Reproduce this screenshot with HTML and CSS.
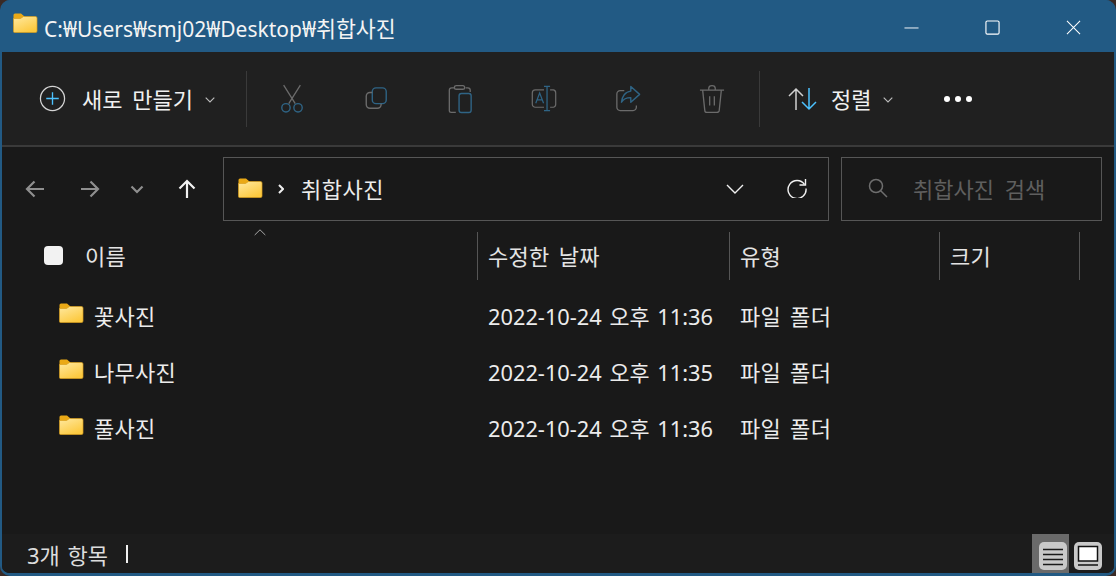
FILE: index.html
```html
<!DOCTYPE html>
<html lang="ko">
<head>
<meta charset="utf-8">
<title>취합사진</title>
<link rel="stylesheet" href="styles.css">
</head>
<body>
<svg class="defs" width="0" height="0" aria-hidden="true">
  <defs>
    <linearGradient id="fg" x1="0" y1="0" x2="0.6" y2="1">
      <stop offset="0" stop-color="#ffe9a0"/>
      <stop offset="1" stop-color="#fcc93f"/>
    </linearGradient>
    <symbol id="folder" viewBox="0 0 25 20">
      <path d="M0.5 2 a1.5 1.5 0 0 1 1.5-1.5 h6 l3.5 3 v3 h-11 z" fill="#eaa916"/>
      <path d="M0.5 5.5 h7 l3-2 h12 a1.5 1.5 0 0 1 1.5 1.5 v13 a1.5 1.5 0 0 1-1.5 1.5 h-21 a1 1 0 0 1-1-1 z" fill="url(#fg)" stroke="#d99f1e" stroke-width="0.7"/>
    </symbol>
  </defs>
</svg>
<div class="window">
  <header class="titlebar">
    <svg class="title-folder"><use href="#folder"/></svg>
    <span class="title-text">C:₩Users₩smj02₩Desktop₩<span class="title-ko">취합사진</span></span>
    <div class="controls">
      <svg class="ctl" viewBox="0 0 16 16"><path d="M0.5 8.5h15" stroke="#fff" fill="none"/></svg>
      <svg class="ctl" viewBox="0 0 16 16"><rect x="1" y="1" width="14" height="14" rx="1.5" stroke="#fff" stroke-width="1.2" fill="none"/></svg>
      <svg class="ctl" viewBox="0 0 16 16"><path d="M1 1l14 14M15 1L1 15" stroke="#fff" stroke-width="1.1" fill="none"/></svg>
    </div>
  </header>

  <section class="toolbar">
    <button class="new-btn">
      <svg class="ic-new" viewBox="0 0 28 28"><circle cx="14" cy="14" r="12.5" fill="none" stroke="#d4d4d4" stroke-width="1.3"/><path d="M14 7.5v13M7.5 14h13" stroke="#4cc2ff" stroke-width="1.4"/></svg>
      <span class="label">새로 만들기</span>
      <svg class="caret" viewBox="0 0 10 6"><path d="M0.7 0.7L5 5l4.3-4.3" fill="none" stroke="#bdbdbd" stroke-width="1.1"/></svg>
    </button>
    <span class="tsep"></span>
    <div class="tools">
      <svg class="tool" viewBox="0 0 28 32"><path d="M5 1l12.5 20M23 1L10.5 21" stroke="#6b6b6b" stroke-width="1.4" fill="none"/><circle cx="7.5" cy="25.5" r="4.5" fill="none" stroke="#2f6485" stroke-width="1.5"/><circle cx="20.5" cy="25.5" r="4.5" fill="none" stroke="#2f6485" stroke-width="1.5"/></svg>
      <svg class="tool" viewBox="0 0 28 32"><rect x="10" y="4" width="15" height="17" rx="4" fill="none" stroke="#2f6485" stroke-width="1.5"/><path d="M10 9h-2.5a4 4 0 0 0-4 4v9a4 4 0 0 0 4 4h8a4 4 0 0 0 4-4v-1" fill="none" stroke="#6b6b6b" stroke-width="1.5"/></svg>
      <svg class="tool" viewBox="0 0 28 32"><path d="M8 4h-3a2.500 2.500 0 0 0-2.500 2.500v22a2 2 0 0 0 2 2h5M20 4h2.500a2.500 2.500 0 0 1 2.500 2.500v2" fill="none" stroke="#6b6b6b" stroke-width="1.4"/><rect x="8" y="1.500" width="11" height="4" rx="2" fill="none" stroke="#6b6b6b" stroke-width="1.4"/><rect x="13" y="10" width="13" height="20.500" rx="2.500" fill="none" stroke="#2f6485" stroke-width="1.5"/></svg>
      <svg class="tool wide" viewBox="0 0 30 32"><path d="M15 5.500h-10a3.500 3.500 0 0 0-3.500 3.500v13a3.500 3.500 0 0 0 3.500 3.500h10M22 5.500h4a3.500 3.500 0 0 1 2.500 3.500v13a3.500 3.500 0 0 1-2.500 3.500h-4" fill="none" stroke="#6b6b6b" stroke-width="1.4"/><path d="M15 1.500h7M15 29.500h7M18.500 1.500v28" stroke="#2f6485" stroke-width="1.500" fill="none"/><path d="M5.500 21l4.500-12 4.500 12M7 17h6" stroke="#2f6485" stroke-width="1.400" fill="none"/></svg>
      <svg class="tool wide" viewBox="0 0 28 32"><path d="M10 7h-4.500a3.500 3.500 0 0 0-3.500 3.500v14.500a3.500 3.500 0 0 0 3.500 3.500h14a3.500 3.500 0 0 0 3.500-3.500v-2" fill="none" stroke="#6b6b6b" stroke-width="1.400"/><path d="M17 2.500l9.500 8.500-9.500 8.500v-5c-5 0-8 1.500-10 5 .5-6 4-11.500 10-12z" fill="none" stroke="#2f6485" stroke-width="1.500" stroke-linejoin="round"/></svg>
      <svg class="tool wide" viewBox="0 0 28 32"><path d="M1 6.500h26M4 7l2.200 21a2.500 2.500 0 0 0 2.500 2.500h10.600a2.500 2.500 0 0 0 2.500-2.500l2.200-21M10.500 6.500v-2a3.500 3 0 0 1 7 0v2M11.500 13v10M16.500 13v10" fill="none" stroke="#6b6b6b" stroke-width="1.400"/></svg>
    </div>
    <span class="tsep"></span>
    <button class="sort-btn">
      <svg class="ic-sort" viewBox="0 0 29 24"><path d="M8 23V2M1 9l7-7 7 7" fill="none" stroke="#d0d0d0" stroke-width="1.500"/><path d="M21 1v21M14 15l7 7 7-7" fill="none" stroke="#4cc2ff" stroke-width="1.500"/></svg>
      <span class="label">정렬</span>
      <svg class="caret" viewBox="0 0 10 6"><path d="M0.7 0.7L5 5l4.3-4.3" fill="none" stroke="#bdbdbd" stroke-width="1.100"/></svg>
    </button>
    <div class="more"><i></i><i></i><i></i></div>
  </section>

  <main class="content">
    <nav class="navbar">
      <div class="navbtns">
        <svg class="nb" viewBox="0 0 20 20"><path d="M19 10H2M9.500 2.500L2 10l7.500 7.500" fill="none" stroke="#8f8f8f" stroke-width="2.200"/></svg>
        <svg class="nb fw" viewBox="0 0 20 20"><path d="M1 10h17M10.500 2.500L18 10l-7.500 7.500" fill="none" stroke="#8f8f8f" stroke-width="2.200"/></svg>
        <svg class="nb dn" viewBox="0 0 14 9"><path d="M1.500 1.500L7 7l5.500-5.500" fill="none" stroke="#8f8f8f" stroke-width="2.200"/></svg>
        <svg class="nb up" viewBox="0 0 20 20"><path d="M10 19V2M2.500 9.500L10 2l7.500 7.500" fill="none" stroke="#f2f2f2" stroke-width="2.200"/></svg>
      </div>
      <div class="address">
        <svg class="addr-folder"><use href="#folder"/></svg>
        <svg class="crumb" viewBox="0 0 6 10"><path d="M1 1l4 4-4 4" fill="none" stroke="#eee" stroke-width="2"/></svg>
        <span class="path">취합사진</span>
        <svg class="addr-down" viewBox="0 0 18 10"><path d="M1 1l8 8 8-8" fill="none" stroke="#f0f0f0" stroke-width="1.400"/></svg>
        <svg class="refresh" viewBox="0 0 20 20"><path d="M17.500 6.500A9 9 0 1 0 19 10.500" fill="none" stroke="#f0f0f0" stroke-width="1.400"/><path d="M18.500 1v6h-6" fill="none" stroke="#f0f0f0" stroke-width="1.400"/></svg>
      </div>
      <div class="search">
        <svg class="s-ic" viewBox="0 0 20 20"><circle cx="8" cy="8" r="6.500" fill="none" stroke="#6e6e6e" stroke-width="1.500"/><path d="M12.700 12.700L19 19" stroke="#6e6e6e" stroke-width="1.500"/></svg>
        <span class="s-text">취합사진 검색</span>
      </div>
    </nav>

    <div class="cols head">
      <div class="cell first">
        <span class="check"></span>
        <span>이름</span>
        <svg class="sortmark" viewBox="0 0 12 7"><path d="M0.700 6L6 0.800 11.300 6" fill="none" stroke="#a8a8a8" stroke-width="1"/></svg>
      </div>
      <div class="cell sep">수정한 날짜</div>
      <div class="cell sep">유형</div>
      <div class="cell sep end">크기</div>
    </div>

    <div class="rows">
      <div class="cols row">
        <div class="cell name"><svg class="row-folder"><use href="#folder"/></svg><span>꽃사진</span></div>
        <div class="cell data date">2022-10-24 오후 11:36</div>
        <div class="cell data kind">파일 폴더</div>
        <div class="cell data"></div>
      </div>
      <div class="cols row">
        <div class="cell name"><svg class="row-folder"><use href="#folder"/></svg><span>나무사진</span></div>
        <div class="cell data date">2022-10-24 오후 11:35</div>
        <div class="cell data kind">파일 폴더</div>
        <div class="cell data"></div>
      </div>
      <div class="cols row">
        <div class="cell name"><svg class="row-folder"><use href="#folder"/></svg><span>풀사진</span></div>
        <div class="cell data date">2022-10-24 오후 11:36</div>
        <div class="cell data kind">파일 폴더</div>
        <div class="cell data"></div>
      </div>
    </div>

    <footer class="status">
      <span class="count">3개 항목</span>
      <span class="divider"></span>
      <div class="views">
        <div class="view active">
          <svg class="v-ic" viewBox="0 0 28 28"><rect width="28" height="28" rx="5" fill="#c9c9c9"/><path d="M4 7.500h20M4 12.500h20M4 17.500h20M4 22.500h20" stroke="#1a1a1a" stroke-width="1.500"/></svg>
        </div>
        <div class="view second">
          <svg class="v-ic" viewBox="0 0 28 28"><rect width="28" height="28" rx="5" fill="#c9c9c9"/><rect x="4.500" y="4.500" width="19" height="14.500" fill="#fff" stroke="#111" stroke-width="1.500"/><path d="M4 23h20" stroke="#111" stroke-width="1.500"/></svg>
        </div>
      </div>
    </footer>
  </main>
</div>
</body>
</html>
```

FILE: styles.css
```css
* { box-sizing: border-box; }

html, body {
  margin: 0;
  height: 100%;
  background: #3a2a25;
  overflow: hidden;
}

body {
  font-family: "Noto Sans", "Noto Sans CJK KR", sans-serif;
  color: #ececec;
}

.defs { position: absolute; }

svg { display: block; flex: none; }

button {
  background: none;
  border: 0;
  padding: 0;
  color: inherit;
  font: inherit;
  display: flex;
  align-items: center;
}

.window {
  width: 1116px;
  height: 576px;
  display: flex;
  flex-direction: column;
  background: #225a84;
  border: 2px solid #225a84;
  border-top: 0;
  border-bottom-width: 3px;
  border-radius: 10px;
  overflow: hidden;
}

/* title bar */
.titlebar {
  height: 52px;
  flex: none;
  display: flex;
  align-items: center;
  padding: 0 0 0 11px;
  background: #225a84;
}

.title-folder { width: 25px; height: 20px; margin: -6px 6px 0 0; }

.title-text { font-size: 21px; color: #f4f4f4; margin-top: 3px; white-space: nowrap; }

.title-ko { font-size: 21.700px; }

.controls { margin-left: auto; display: flex; align-items: center; padding-right: 33px; gap: 66px; margin-top: 2px; }

.ctl { width: 15px; height: 15px; }

/* toolbar */
.toolbar {
  height: 95px;
  flex: none;
  display: flex;
  align-items: center;
  background: #202020;
  border-bottom: 2px solid #3a3a3a;
  padding-left: 37px;
}

.label { font-size: 22px; line-height: 28px; white-space: nowrap; color: #f0f0f0; word-spacing: 4px; }

.new-btn { width: 207px; }

.ic-new { width: 27px; height: 27px; margin-right: 16px; }

.caret { width: 10px; height: 6px; margin-left: 12px; margin-top: 2px; }

.tsep { width: 1px; height: 56px; background: #3a3a3a; flex: none; }

.tools { display: flex; align-items: center; width: 512px; padding-left: 32px; gap: 58.100px; }

.tool { width: 26px; height: 30px; }

.sort-btn { margin-left: 28px; }

.ic-sort { width: 29px; height: 24px; margin-right: 14px; }

.more { display: flex; gap: 5px; margin-left: 51px; }

.more i { width: 6px; height: 6px; border-radius: 50%; background: #fff; }

/* content */
.content {
  flex: 1;
  min-height: 0;
  display: flex;
  flex-direction: column;
  background: #191919;
}

.navbar { display: flex; align-items: center; height: 64px; margin-top: 10px; flex: none; }

.navbtns { width: 221px; display: flex; align-items: center; padding-left: 23px; }

.nb { width: 20px; height: 20px; }

.nb.fw { margin-left: 35px; }

.nb.dn { width: 14px; height: 9px; margin-left: 30px; }

.nb.up { margin-left: 33px; }

.address, .search { height: 64px; border: 1px solid #565656; display: flex; align-items: center; }

.address { width: 606px; padding-left: 14px; }

.addr-folder { width: 25px; height: 20px; margin-top: -2px; }

.crumb { width: 6px; height: 10px; margin-left: 15px; }

.path { font-size: 22px; margin: -2px 0 0 17px; color: #ececec; letter-spacing: 0.500px; }

.addr-down { width: 18px; height: 10px; margin-left: auto; }

.refresh { width: 20px; height: 20px; margin: -2px 21px 0 43px; }

.search { width: 261px; margin-left: 12px; padding-left: 26px; }

.s-ic { width: 20px; height: 20px; margin-top: -3px; }

.s-text { font-size: 22px; color: #5f5f5f; margin: -2px 0 0 25px; word-spacing: 5px; }

/* columns */
.cols {
  display: grid;
  grid-template-columns: 475px 252px 210px 141px;
}

.cell { display: flex; align-items: center; font-size: 22px; white-space: nowrap; padding-bottom: 2px; letter-spacing: 0.300px; }

.head { height: 48px; margin-top: 11px; flex: none; }

.head .cell { color: #e4e4e4; word-spacing: 3px; }

.first { position: relative; padding-left: 42px; }

.check { width: 19px; height: 19px; border-radius: 4px; background: #f2f2f2; margin-right: 22px; }

.sortmark { position: absolute; left: 252px; top: -3px; width: 12px; height: 7px; }

.sep { border-left: 1px solid #555; padding-left: 10px; }

.end { border-right: 1px solid #555; }

.rows { margin-top: 8px; }

.row { height: 56px; }

.name { padding-left: 57px; }

.row-folder { width: 25px; height: 20px; margin: -4px 10px 0 0; }

.data { padding-left: 11px; color: #ececec; }

.date { font-size: 21.800px; word-spacing: 2px; letter-spacing: 0; }

.kind { word-spacing: 3px; }

/* status bar */
.status {
  margin-top: auto;
  height: 39px;
  flex: none;
  display: flex;
  align-items: center;
  background: #1c1c1c;
  padding-left: 25px;
}

.count { font-size: 22px; color: #dcdcdc; word-spacing: 2px; }

.divider { width: 2px; height: 18px; background: #f0f0f0; margin-left: 18px; }

.views { margin-left: auto; display: flex; height: 100%; margin-right: 12px; }

.view { width: 37px; height: 39px; display: flex; align-items: center; padding-top: 5px; }

.view.active { background: #6a6a6a; padding-left: 7px; }

.view.second { width: 33px; padding-left: 5px; }

.v-ic { width: 28px; height: 28px; }
```
